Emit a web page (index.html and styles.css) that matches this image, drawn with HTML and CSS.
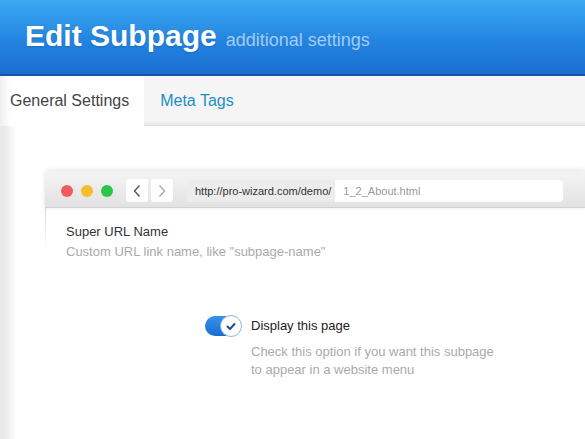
FILE: index.html
```html
<!DOCTYPE html>
<html lang="en">
<head>
    <meta charset="UTF-8">
    <meta name="viewport" content="width=device-width, initial-scale=1.0">
    <title>Edit Subpage</title>
    <link rel="stylesheet" href="styles.css">
</head>
<body>

<!-- Page Header -->
<div class="page-header">
    <h1>Edit Subpage</h1>
    <span class="subtitle">additional settings</span>
</div>

<!-- Tabs -->
<div class="tabs">
    <a class="tab active" href="#">General Settings</a>
    <a class="tab" href="#">Meta Tags</a>
</div>

<div class="main">
    <!-- Browser preview -->
    <div class="browser">
        <div class="browser-bar">
            <span class="dot red"></span>
            <span class="dot yellow"></span>
            <span class="dot green"></span>
            <div class="nav-btns">
                <span class="nav-btn">
                    <svg width="10" height="14" viewBox="0 0 10 14"><path d="M7.5 1.5L2.5 7l5 5.5" fill="none" stroke="#555" stroke-width="1.4"/></svg>
                </span>
                <span class="nav-btn">
                    <svg width="10" height="14" viewBox="0 0 10 14"><path d="M2.5 1.5L7.5 7l-5 5.5" fill="none" stroke="#aaa" stroke-width="1.4"/></svg>
                </span>
            </div>
            <div class="url-bar">
                <span class="url-base">http://pro-wizard.com/demo/</span>
                <span class="url-page">1_2_About.html</span>
            </div>
        </div>
        <div class="browser-body">
            <div class="field-label">Super URL Name</div>
            <div class="field-help">Custom URL link name, like "subpage-name"</div>
        </div>
    </div>

    <!-- Display option -->
    <div class="option">
        <span class="toggle">
            <span class="knob">
                <svg width="20" height="20" viewBox="0 0 20 20"><path d="M6.5 10.5l2.5 2.5 4.5-5" fill="none" stroke="#1b4f9c" stroke-width="2" stroke-linecap="round" stroke-linejoin="round"/></svg>
            </span>
        </span>
        <div class="option-text">
            <div class="option-label">Display this page</div>
            <div class="option-help">Check this option if you want this subpage<br>to appear in a website menu</div>
        </div>
    </div>
</div>

</body>
</html>
```

FILE: styles.css
```css
/* styles.css */
body {
    font-family: "Liberation Sans", Arial, sans-serif;
    margin: 0;
    background-color: #fff;
    overflow: hidden;
}

.page-header {
    height: 76px;
    box-sizing: border-box;
    padding: 21px 0 0 25px;
    display: flex;
    align-items: baseline;
    background: linear-gradient(to bottom, #3ba9f3 0%, #2384e0 55%, #1a6ed0 100%);
    border-bottom: 2px solid #1656a8;
}

.page-header h1 {
    margin: 0;
    font-size: 30px;
    line-height: 30px;
    color: #fff;
    font-weight: bold;
    text-shadow: 0 1px 2px rgba(0, 0, 0, 0.15);
}

.subtitle {
    margin-left: 9px;
    font-size: 18px;
    color: #a4cbf2;
}

.tabs {
    display: flex;
    height: 49px;
    background-color: #f5f5f5;
    border-bottom: 1px solid #dcdcdc;
    box-shadow: inset 0 -3px 0 #ececec;
}

.tab {
    display: block;
    line-height: 49px;
    font-size: 16px;
    text-decoration: none;
    color: #1b8fc4;
    padding: 0 16px;
}

.tab.active {
    color: #444;
    padding: 0 15px 0 10px;
    height: 50px;
    background: linear-gradient(to right, #efefef 0, #fff 10px);
}

.main {
    padding: 45px 0 0 45px;
    min-height: 268px;
    background: linear-gradient(to right, #e8e8e8 0, #e8e8e8 4px, #fff 16px);
}

.browser-bar {
    height: 37px;
    box-sizing: border-box;
    padding: 3px 22px 0 16px;
    display: flex;
    align-items: center;
    background: linear-gradient(to bottom, #f4f4f4 0%, #e2e2e2 100%);
    border-bottom: 1px solid #d2d2d2;
    border-radius: 4px 0 0 0;
    box-shadow: 0 -1px 5px rgba(0, 0, 0, 0.12);
}

.dot {
    width: 12px;
    height: 12px;
    border-radius: 50%;
    margin-right: 8px;
}

.dot.red {
    background-color: #f25b5e;
}

.dot.yellow {
    background-color: #f6bd2d;
}

.dot.green {
    background-color: #2cc54b;
    margin-right: 13px;
}

.nav-btns {
    display: flex;
    gap: 3px;
    margin-right: 14px;
}

.nav-btn {
    width: 22px;
    height: 23px;
    background-color: #fff;
    border-radius: 3px;
    display: flex;
    align-items: center;
    justify-content: center;
}

.url-bar {
    flex: 1;
    height: 22px;
    background-color: #fff;
    border-radius: 4px;
    display: flex;
    align-items: center;
    font-size: 11px;
    overflow: hidden;
}

.url-base {
    height: 100%;
    display: flex;
    align-items: center;
    padding: 0 4px 0 8px;
    background-color: #ececec;
    color: #333;
}

.url-page {
    padding-left: 8px;
    color: #9a9a9a;
}

.browser-body {
    padding: 14px 0 0 20px;
    border-left: 1px solid;
    border-image: linear-gradient(to bottom, #d4d4d4, rgba(255, 255, 255, 0) 40px) 1;
}

.field-label {
    font-size: 13px;
    line-height: 20px;
    color: #333;
}

.field-help {
    font-size: 13px;
    line-height: 20px;
    color: #aaa;
}

.option {
    display: flex;
    align-items: flex-start;
    margin-top: 55px;
    padding-left: 160px;
}

.toggle {
    position: relative;
    width: 36px;
    height: 20px;
    margin-top: -1px;
    margin-right: 10px;
    border-radius: 10px;
    background: linear-gradient(to bottom, #3592ea, #1a6dcf);
}

.knob {
    position: absolute;
    right: -1px;
    top: -1px;
    width: 20px;
    height: 20px;
    border-radius: 50%;
    background-color: #fff;
    border: 1px solid #8bb7ea;
}

.knob svg {
    display: block;
}

.option-label {
    font-size: 13px;
    line-height: 18px;
    color: #222;
}

.option-help {
    margin-top: 8px;
    font-size: 13px;
    line-height: 18px;
    color: #aaa;
}
```
